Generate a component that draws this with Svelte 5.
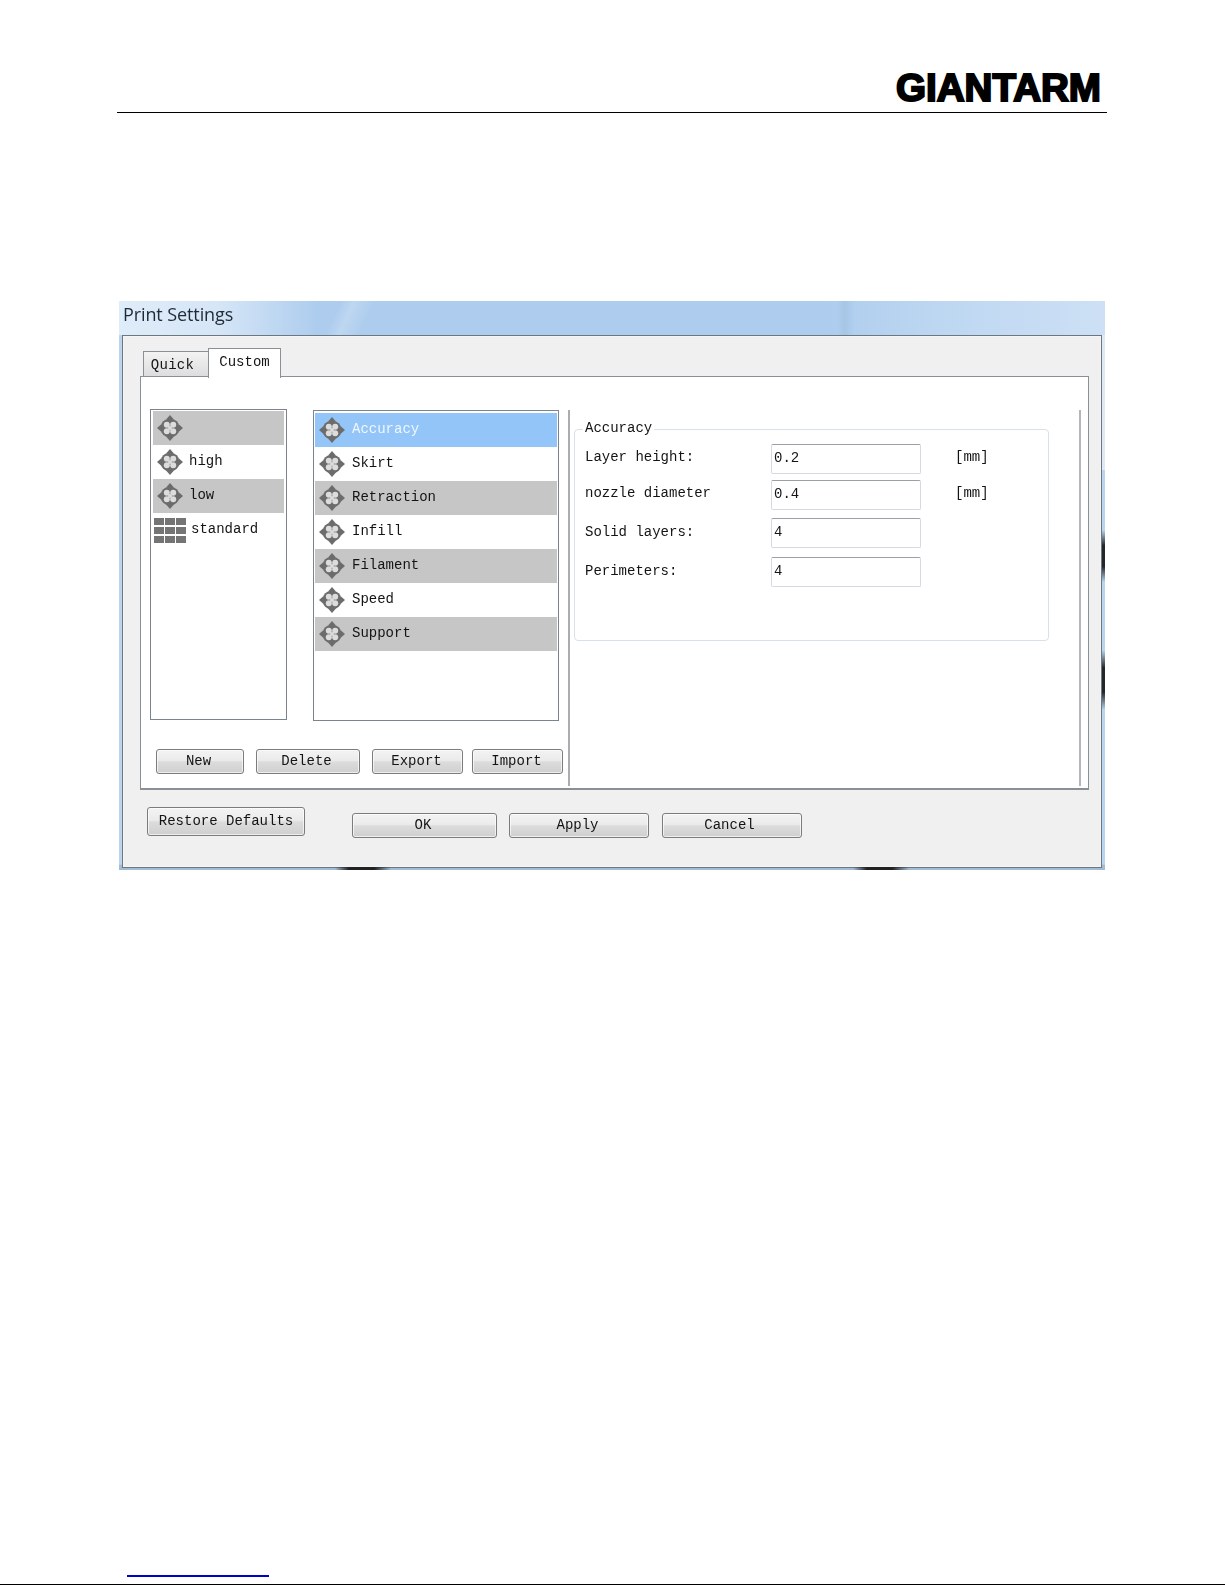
<script>
  const presets = [
    { name: '', icon: 'cross' },
    { name: 'high', icon: 'cross' },
    { name: 'low', icon: 'cross' },
    { name: 'standard', icon: 'grid' }
  ];
  const sections = ['Accuracy', 'Skirt', 'Retraction', 'Infill', 'Filament', 'Speed', 'Support'];
  const fields = [
    { label: 'Layer height:', value: '0.2', unit: '[mm]' },
    { label: 'nozzle diameter', value: '0.4', unit: '[mm]' },
    { label: 'Solid layers:', value: '4', unit: '' },
    { label: 'Perimeters:', value: '4', unit: '' }
  ];
</script>

{#snippet cross()}
  <svg class="icon" viewBox="0 0 26 26" aria-hidden="true">
    <path d="M13 0 L16.5 4 L9.5 4 Z M13 26 L16.5 22 L9.5 22 Z M0 13 L4 9.5 L4 16.5 Z M26 13 L22 9.5 L22 16.5 Z" fill="#6c6c6c" />
    <circle cx="13" cy="13" r="9.6" fill="#6c6c6c" />
    <circle cx="9.8" cy="9.8" r="3" fill="#dcdcdc" />
    <circle cx="16.2" cy="9.8" r="3" fill="#dcdcdc" />
    <circle cx="9.8" cy="16.2" r="3" fill="#dcdcdc" />
    <circle cx="16.2" cy="16.2" r="3" fill="#dcdcdc" />
    <circle cx="13" cy="13" r="2" fill="#dcdcdc" />
  </svg>
{/snippet}

{#snippet grid()}
  <div class="gridicon" aria-hidden="true">
    {#each Array(9) as _}<i></i>{/each}
  </div>
{/snippet}

<div class="page">
  <header class="head">
    <svg class="logo" viewBox="0 0 207 32" role="img" aria-label="GIANTARM">
      <text x="1" y="30" textLength="205" lengthAdjust="spacingAndGlyphs">GIANTARM</text>
    </svg>
  </header>

  <section class="window">
    <div class="titlebar">Print Settings</div>
    <div class="panel">
      <div class="tabs">
        <div class="tab quick">Quick</div>
        <div class="tab custom">Custom</div>
      </div>
      <div class="pane">
        <div class="leftcol">
          <div class="lists">
            <div class="list l1">
              {#each presets as p, i}
                <div class="row" class:gray={i % 2 === 0} class:gridrow={p.icon === 'grid'}>
                  {#if p.icon === 'grid'}{@render grid()}{:else}{@render cross()}{/if}
                  <span>{p.name}</span>
                </div>
              {/each}
            </div>
            <div class="list l2">
              {#each sections as s, i}
                <div class="row" class:gray={i % 2 === 0 && i > 0} class:sel={i === 0}>
                  {@render cross()}
                  <span>{s}</span>
                </div>
              {/each}
            </div>
          </div>
          <div class="actions">
            <button class="b-new">New</button>
            <button class="b-del">Delete</button>
            <button class="b-exp">Export</button>
            <button class="b-imp">Import</button>
          </div>
        </div>
        <div class="rightcol">
          <div class="group">
            <span class="legend">Accuracy</span>
            {#each fields as f}
              <div class="field">
                <label for={f.label}>{f.label}</label>
                <input id={f.label} value={f.value} readonly />
                {#if f.unit}<span class="unit">{f.unit}</span>{/if}
              </div>
            {/each}
          </div>
        </div>
      </div>
      <div class="footer">
        <button class="restore">Restore Defaults</button>
        <button class="ok">OK</button>
        <button class="apply">Apply</button>
        <button class="cancel">Cancel</button>
      </div>
    </div>
    <i class="smudge s1"></i>
    <i class="smudge s2"></i>
    <i class="smudge s3"></i>
    <i class="smudge s4"></i>
  </section>

  <footer class="foot">
    <div class="link"></div>
    <div class="rule"></div>
  </footer>
</div>

<style>
  :global(body) {
    margin: 0;
    background: #fff;
  }
  .page {
    width: 1225px;
    height: 1585px;
    display: flex;
    flex-direction: column;
    font-family: "Liberation Mono", "DejaVu Sans Mono", monospace;
    font-size: 14px;
    color: #141414;
    overflow: hidden;
  }
  .head {
    height: 112px;
    margin: 0 118px 0 117px;
    border-bottom: 1px solid #000;
    display: flex;
    justify-content: flex-end;
    align-items: flex-start;
    box-sizing: content-box;
  }
  .logo {
    width: 207px;
    height: 32px;
    margin: 71px 5px 0 0;
    overflow: visible;
  }
  .logo text {
    font-family: "Liberation Sans", sans-serif;
    font-weight: 700;
    font-size: 38px;
    fill: #000;
    stroke: #000;
    stroke-width: 2;
    stroke-linejoin: miter;
  }
  .window {
    position: relative;
    width: 986px;
    height: 569px;
    margin: 188px 0 0 119px;
    padding: 0 3px 2px;
    box-sizing: border-box;
    display: flex;
    flex-direction: column;
    background: linear-gradient(180deg, #bcd5ee 0, #bcd5ee 99%, #a3bcd4 99.1%, #a3bcd4 100%);
    filter: blur(0.35px);
  }
  .window::after {
    content: "";
    position: absolute;
    right: 0;
    top: 34px;
    width: 3px;
    height: 135px;
    background: #dfe9f4;
  }
  .titlebar {
    height: 34px;
    flex: none;
    padding: 1px 0 0 4px;
    box-sizing: border-box;
    margin: 0 -3px;
    font-family: "Open Sans", sans-serif;
    font-size: 18px;
    letter-spacing: -0.1px;
    line-height: 24px;
    color: #1f2a36;
    background:
      linear-gradient(115deg, transparent 0, transparent 22.2%, rgba(255, 255, 255, 0.2) 23.5%, transparent 25.5%),
      linear-gradient(90deg, transparent 72.8%, rgba(120, 150, 180, 0.16) 73.6%, transparent 74.6%),
      linear-gradient(90deg, #dfecf9 0, #d6e6f7 10%, #aecdee 20%, #aecdee 72%, #bcd6f1 82%, #cde0f5 100%);
  }
  .panel {
    flex: 1;
    background: #f0f0f0;
    border: 1px solid #6d7780;
    box-shadow: 0 0 0 1px rgba(255, 255, 255, 0.35) inset;
    padding: 12px 10px 0 17px;
    display: flex;
    flex-direction: column;
    min-height: 0;
  }
  .tabs {
    display: flex;
    height: 29px;
    align-items: flex-end;
    padding-left: 3px;
  }
  .tab {
    box-sizing: border-box;
    border: 1px solid #8b9096;
    border-bottom: 0;
    text-align: center;
  }
  .quick {
    width: 65px;
    height: 26px;
    background: linear-gradient(180deg, #f3f3f3, #dcdcdc);
    line-height: 27px;
    border-right: 0;
    padding-right: 7px;
    letter-spacing: 0.3px;
  }
  .custom {
    position: relative;
    z-index: 1;
    width: 73px;
    height: 30px;
    margin-bottom: -1px;
    background: #fff;
    line-height: 27px;
  }
  .pane {
    height: 414px;
    width: 949px;
    box-sizing: border-box;
    margin-top: -1px;
    background: #fff;
    border: 1px solid #8b9096;
    border-bottom-width: 2px;
    display: flex;
  }
  .leftcol {
    width: 427px;
    flex: none;
    padding: 32px 0 0 9px;
    box-sizing: border-box;
  }
  .lists {
    display: flex;
    gap: 26px;
    align-items: flex-start;
  }
  .list {
    box-sizing: border-box;
    height: 311px;
    border: 1px solid #7b838c;
    padding: 1px 2px;
  }
  .l1 {
    width: 137px;
  }
  .l2 {
    width: 246px;
    margin-top: 1px;
    padding: 2px 1px 0;
  }
  .row {
    height: 34px;
    display: flex;
    align-items: center;
    gap: 6px;
    padding-left: 4px;
  }
  .l2 .row {
    padding-left: 4px;
    gap: 7px;
  }
  .row span {
    padding-bottom: 3px;
  }
  .gray {
    background: #c6c6c6;
  }
  .sel {
    background: #94c5f8;
    color: #eef6ff;
  }
  .icon {
    width: 26px;
    height: 26px;
    flex: none;
    filter: blur(0.7px);
  }
  .gridicon {
    display: grid;
    grid-template-columns: repeat(3, 10px);
    grid-template-rows: repeat(3, 7px);
    gap: 2px 1px;
    flex: none;
    filter: blur(0.7px);
    margin-left: -3px;
    margin-right: -1px;
    width: 32px;
  }
  .gridicon i {
    background: #747474;
  }
  button {
    font: inherit;
    color: inherit;
    padding: 0 0 2px;
    box-sizing: border-box;
    border: 1px solid #7c7c7c;
    border-radius: 3px;
    background: linear-gradient(180deg, #f3f3f3 0, #ebebeb 45%, #dcdcdc 52%, #cfcfcf 100%);
    box-shadow: inset 0 0 0 1px rgba(255, 255, 255, 0.65);
    height: 25px;
    flex: none;
  }
  .actions {
    display: flex;
    margin: 28px 0 0 6px;
    gap: 12px;
  }
  .b-new {
    width: 88px;
    padding-right: 3px;
  }
  .b-del {
    width: 104px;
    padding-right: 3px;
  }
  .b-exp {
    width: 91px;
    padding-right: 2px;
  }
  .b-imp {
    width: 91px;
    margin-left: -3px;
    padding-right: 2px;
  }
  .rightcol {
    width: 513px;
    flex: none;
    box-sizing: border-box;
    margin: 33px 0 2px;
    border-left: 2px solid #a9adb1;
    border-right: 2px solid #b2b6ba;
    padding: 19px 0 0 4px;
  }
  .group {
    position: relative;
    box-sizing: border-box;
    width: 475px;
    height: 212px;
    border: 1px solid #d9e1e8;
    border-radius: 4px;
    padding-top: 14px;
  }
  .legend {
    position: absolute;
    left: 8px;
    top: -11px;
    padding: 0 2px;
    background: #fff;
    line-height: 18px;
  }
  .field {
    display: flex;
    height: 30px;
    align-items: center;
    margin-bottom: 8px;
    padding-left: 10px;
  }
  .field:first-of-type {
    margin-bottom: 6px;
  }
  .field:nth-of-type(3) {
    margin-bottom: 9px;
  }
  .field label {
    width: 186px;
    flex: none;
    padding-bottom: 4px;
  }
  .field:nth-of-type(n + 3) label {
    padding-bottom: 2px;
  }
  .field input {
    width: 150px;
    height: 30px;
    box-sizing: border-box;
    border: 1px solid #d5dae0;
    border-top-color: #9aa0a6;
    border-radius: 2px;
    font: inherit;
    color: inherit;
    padding: 0 2px 2px;
    background: #fff;
    outline: none;
  }
  .unit {
    margin-left: 34px;
    padding-bottom: 5px;
  }
  .footer {
    display: flex;
    align-items: flex-start;
    margin: 17px 0 0 7px;
  }
  .restore {
    width: 158px;
    height: 29px;
    padding-bottom: 2px;
  }
  .ok {
    width: 145px;
    margin: 6px 0 0 47px;
    padding-right: 3px;
  }
  .apply {
    width: 140px;
    margin: 6px 0 0 12px;
    padding-right: 3px;
  }
  .cancel {
    width: 140px;
    margin: 6px 0 0 13px;
    padding-right: 5px;
  }
  .smudge {
    position: absolute;
  }
  .s1,
  .s2 {
    bottom: 0;
    width: 56px;
    height: 3px;
    background: linear-gradient(90deg, transparent, #222 25%, #222 70%, transparent);
  }
  .s1 {
    left: 216px;
  }
  .s2 {
    left: 734px;
  }
  .s3,
  .s4 {
    right: 0;
    width: 3px;
    background: linear-gradient(180deg, transparent, #23272b 30%, #23272b 70%, transparent);
  }
  .s3 {
    top: 229px;
    height: 52px;
  }
  .s4 {
    top: 349px;
    height: 60px;
  }
  .foot {
    margin-top: auto;
  }
  .link {
    width: 142px;
    height: 2px;
    margin: 0 0 7px 127px;
    background: #0000cc;
  }
  .rule {
    height: 1px;
    background: #000;
  }
</style>
